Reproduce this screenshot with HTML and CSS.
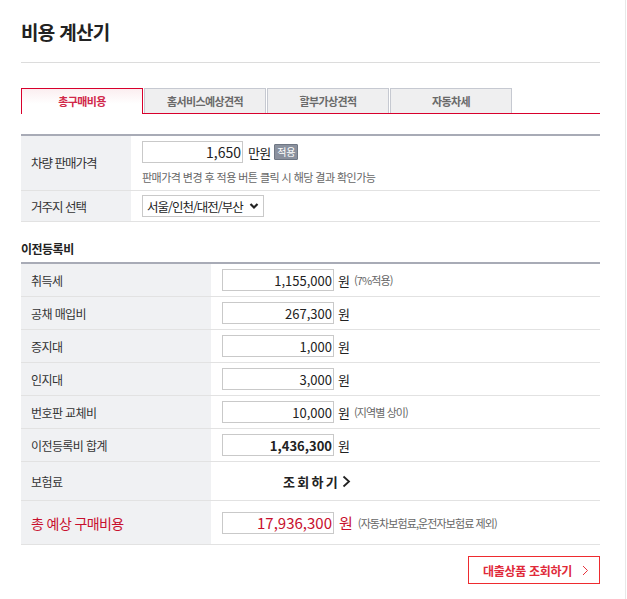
FILE: index.html
```html
<!DOCTYPE html>
<html lang="ko">
<head>
    <meta charset="UTF-8">
    <meta name="viewport" content="width=device-width, initial-scale=1.0">
    <title>비용 계산기</title>
    <link rel="stylesheet" href="styles.css">
</head>
<body>
    <div class="page">
        <h1 class="title">비용 계산기</h1>

        <div class="tabs">
            <div class="tab active">총구매비용</div>
            <div class="tab">홈서비스예상견적</div>
            <div class="tab">할부가상견적</div>
            <div class="tab">자동차세</div>
        </div>

        <div class="sheet first">
            <div class="row price-row">
                <div class="label">차량 판매가격</div>
                <div class="cell">
                    <div class="line">
                        <input type="text" class="num price" value="1,650">
                        <span class="unit">만원</span>
                        <button class="apply">적용</button>
                    </div>
                    <p class="help">판매가격 변경 후 적용 버튼 클릭 시 해당 결과 확인가능</p>
                </div>
            </div>
            <div class="row area-row">
                <div class="label">거주지 선택</div>
                <div class="cell">
                    <div class="select">
                        <span>서울/인천/대전/부산</span>
                        <svg width="10" height="8" viewBox="0 0 10 8"><path d="M1.5 2 L5 5.5 L8.5 2" fill="none" stroke="#222" stroke-width="2.2"/></svg>
                    </div>
                </div>
            </div>
        </div>

        <h2 class="sub">이전등록비</h2>

        <div class="sheet second">
            <div class="row">
                <div class="label">취득세</div>
                <div class="cell"><input type="text" class="num" value="1,155,000"><span class="unit">원</span><span class="note">(7%적용)</span></div>
            </div>
            <div class="row">
                <div class="label">공채 매입비</div>
                <div class="cell"><input type="text" class="num" value="267,300"><span class="unit">원</span></div>
            </div>
            <div class="row">
                <div class="label">증지대</div>
                <div class="cell"><input type="text" class="num" value="1,000"><span class="unit">원</span></div>
            </div>
            <div class="row">
                <div class="label">인지대</div>
                <div class="cell"><input type="text" class="num" value="3,000"><span class="unit">원</span></div>
            </div>
            <div class="row">
                <div class="label">번호판 교체비</div>
                <div class="cell"><input type="text" class="num" value="10,000"><span class="unit">원</span><span class="note">(지역별 상이)</span></div>
            </div>
            <div class="row">
                <div class="label">이전등록비 합계</div>
                <div class="cell"><input type="text" class="num bold" value="1,436,300"><span class="unit">원</span></div>
            </div>
            <div class="row insure-row">
                <div class="label">보험료</div>
                <div class="cell">
                    <a class="lookup" href="#">조회하기
                        <svg width="9" height="13" viewBox="0 0 9 13"><path d="M1.5 1.5 L7 6.5 L1.5 11.5" fill="none" stroke="#222" stroke-width="1.8"/></svg>
                    </a>
                </div>
            </div>
            <div class="row total-row">
                <div class="label">총 예상 구매비용</div>
                <div class="cell"><input type="text" class="num total" value="17,936,300"><span class="unit">원</span><span class="note">(자동차보험료,운전자보험료 제외)</span></div>
            </div>
        </div>

        <div class="actions">
            <a class="loan" href="#">대출상품 조회하기
                <svg width="7" height="11" viewBox="0 0 7 11"><path d="M1 1 L5.5 5.5 L1 10" fill="none" stroke="#e8323c" stroke-width="1"/></svg>
            </a>
        </div>
    </div>
</body>
</html>
```

FILE: styles.css
```css
body {
    margin: 0;
    background: #fff;
    font-family: "Noto Sans CJK KR", "Noto Sans", sans-serif;
    color: #333;
}
.page {
    width: 579px;
    min-height: 599px;
    padding: 0 25px 0 21px;
    border-right: 1px solid #e8e8e8;
    box-sizing: content-box;
}
.title {
    margin: 0;
    padding-top: 19px;
    padding-bottom: 17px;
    font-size: 19px;
    line-height: 26px;
    font-weight: 700;
    letter-spacing: -0.7px;
    color: #222;
    border-bottom: 1px solid #dcdcdc;
}
.tabs {
    display: flex;
    gap: 1px;
    margin-top: 25px;
    border-bottom: 1px solid #d8002c;
    height: 25px;
}
.tab {
    width: 120px;
    height: 24px;
    line-height: 24px;
    text-align: center;
    font-size: 11px;
    font-weight: 700;
    letter-spacing: -0.6px;
    color: #6a6a6a;
    background: #efeff0;
    border: 1px solid #c6c9d1;
    border-bottom: none;
}
.tab.active {
    height: 25px;
    color: #d1284a;
    background: linear-gradient(#fbeef0, #fff 60%);
    border-color: #d8002c;
}
.sheet {
    border-top: 2px solid #a8abb6;
}
.sheet.first {
    margin-top: 20px;
}
.sub {
    margin: 18px 0 4px;
    font-size: 12px;
    line-height: 18px;
    font-weight: 700;
    letter-spacing: -0.5px;
    color: #222;
}
.row {
    display: flex;
    border-bottom: 1px solid #e2e2e2;
    height: 32px;
}
.label {
    flex: none;
    background: #f0f1f3;
    padding-left: 10px;
    display: flex;
    align-items: center;
    font-size: 12px;
    letter-spacing: -0.6px;
    color: #333;
}
.first .label {
    width: 100px;
    font-size: 12.5px;
    letter-spacing: -1px;
}
.second .label {
    width: 180px;
}
.cell {
    flex: 1;
    padding-left: 11px;
    display: flex;
    align-items: center;
    font-size: 12px;
}
.price-row {
    height: 54px;
}
.price-row .label {
    padding-bottom: 2px;
}
.price-row .cell {
    flex-direction: column;
    align-items: flex-start;
    justify-content: flex-start;
    padding-top: 5px;
    box-sizing: border-box;
}
.line {
    display: flex;
    align-items: center;
}
.area-row {
    height: 30px;
}
input.num {
    width: 112px;
    height: 22px;
    box-sizing: border-box;
    border: 1px solid #c9c9c9;
    padding: 0 1px 0 4px;
    text-align: right;
    font-family: "Noto Sans CJK KR", "Noto Sans", sans-serif;
    font-size: 13px;
    color: #222;
    background: #fff;
    outline: none;
}
input.price {
    width: 101px;
    font-size: 14px;
}
input.bold {
    font-weight: 700;
}
input.total {
    font-size: 15px;
    color: #c8102e;
}
.unit {
    margin-left: 4px;
    font-size: 13px;
    color: #222;
}
.line .unit {
    margin-left: 5px;
    letter-spacing: -0.8px;
}
.apply {
    margin-left: 4px;
    height: 16px;
    padding: 0 2px;
    border: 1px solid #6f7784;
    background: #8a919e;
    color: #fff;
    font-family: "Noto Sans CJK KR", "Noto Sans", sans-serif;
    font-size: 10px;
    line-height: 14px;
    letter-spacing: -0.3px;
    border-radius: 1px;
}
.help {
    margin: 6px 0 0;
    font-size: 11px;
    color: #666;
    letter-spacing: -0.55px;
}
.note {
    margin-left: 4px;
    font-size: 11px;
    color: #666;
    letter-spacing: -0.9px;
}
.select {
    display: flex;
    align-items: center;
    gap: 6px;
    height: 22px;
    box-sizing: border-box;
    border: 1px solid #c9c9c9;
    padding: 0 4px 0 4px;
    font-size: 12.5px;
    letter-spacing: -1px;
    color: #222;
}
.insure-row {
    height: 38px;
}
.lookup {
    margin-left: 61px;
    display: flex;
    align-items: center;
    gap: 2px;
    font-size: 13px;
    font-weight: 700;
    letter-spacing: 2.3px;
    color: #222;
    text-decoration: none;
}
.total-row {
    height: 43px;
}
.total-row .label {
    font-size: 14px;
    color: #c8102e;
}
.total-row .unit {
    font-size: 15px;
    color: #c8102e;
    margin-left: 5px;
}
.total-row .note {
    margin-left: 5px;
}
.actions {
    display: flex;
    justify-content: flex-end;
    margin-top: 11px;
}
.loan {
    display: flex;
    align-items: center;
    justify-content: center;
    gap: 10px;
    width: 132px;
    height: 28px;
    box-sizing: border-box;
    border: 1px solid #ee2b2f;
    font-size: 12px;
    font-weight: 700;
    letter-spacing: -0.3px;
    color: #e02a3a;
    text-decoration: none;
    padding-left: 4px;
}
```
